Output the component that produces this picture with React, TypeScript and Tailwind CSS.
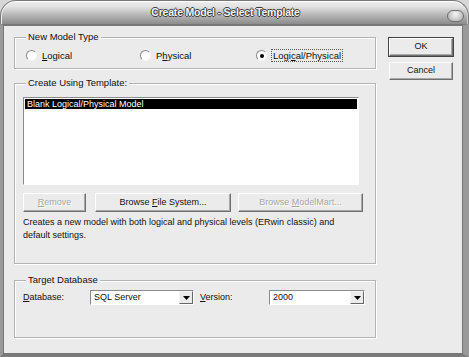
import * as React from "react"

const font = { fontFamily: '"Liberation Sans", Arial, sans-serif' }

function U({ children }: { children: React.ReactNode }) {
  return <span className="underline underline-offset-1">{children}</span>
}

function Radio({ checked, children, focus }: { checked?: boolean; children: React.ReactNode; focus?: boolean }) {
  return (
    <label className="flex items-center gap-[4px]">
      <span className="flex h-[11px] w-[11px] items-center justify-center rounded-full border border-[#8a8a8a] border-b-[#f4f4f4] border-r-[#f4f4f4] bg-white">
        {checked && <span className="h-[4px] w-[4px] rounded-full bg-black" />}
      </span>
      <span className={focus ? "border border-dotted border-[#555] px-[1px] leading-[11px]" : "border border-transparent leading-[11px]"}>{children}</span>
    </label>
  )
}

function Btn({ children, className = "", disabled, primary }: { children: React.ReactNode; className?: string; disabled?: boolean; primary?: boolean }) {
  return (
    <div
      className={
        "flex items-center justify-center bg-[#ebebeb] border border-white border-r-[#6f6f6f] border-b-[#6f6f6f] shadow-[inset_-1px_-1px_0_#a8a8a8] " +
        (primary ? "outline outline-1 outline-[#444] " : "") +
        (disabled ? "text-[#a6a6a6] [text-shadow:1px_1px_0_#fff] " : "text-[#111] ") +
        className
      }
    >
      <span>{children}</span>
    </div>
  )
}

function Select({ value, className = "" }: { value: string; className?: string }) {
  return (
    <div className={"flex h-[15px] items-stretch border border-[#8a8a8a] border-b-white border-r-white bg-white " + className}>
      <div className="flex-1 pl-[3px] leading-[13px]">{value}</div>
      <div className="flex w-[14px] items-center justify-center border border-[#f4f4f4] border-r-[#666] border-b-[#666] bg-[#ebebeb]">
        <svg width="7" height="4" viewBox="0 0 7 4"><path d="M0 0h7L3.5 4z" fill="#000" /></svg>
      </div>
    </div>
  )
}

// etched group box; the caption sits on the top line via a negative margin
function Group({ title, className = "", children }: { title: string; className?: string; children: React.ReactNode }) {
  return (
    <div className={"border border-[#b4b4b4] shadow-[1px_1px_0_#fff,inset_1px_1px_0_#fff] px-[8px] " + className}>
      <div className="-mt-[7px] ml-[3px] w-fit bg-[#ebebeb] px-[2px] text-[9.5px] leading-[12px] text-[#111]">{title}</div>
      {children}
    </div>
  )
}

export default function App() {
  return (
    <div className="flex h-[357px] w-[469px] flex-col overflow-hidden bg-[#d6d6d6] text-[9px] text-[#111]" style={font}>
      <div className="grid h-[24px] shrink-0 grid-cols-[1fr_auto_1fr] items-center rounded-t-[16px] border border-b-0 border-[#7a7a7a] bg-[linear-gradient(#eeeeee_0%,#e2e2e2_25%,#bdbdbd_55%,#8c8c8c_100%)] shadow-[inset_0_1px_0_#fff,inset_1px_0_0_#f0f0f0,inset_-1px_0_0_#d0d0d0]">
        <div />
        <div className="pr-[18px] pt-[1px] text-[10.5px] font-bold tracking-[-0.2px] text-[#f4f4f4] [text-shadow:1px_0_#3a3a3a,-1px_0_#3a3a3a,0_1px_#3a3a3a,0_-1px_#3a3a3a]">
          Create Model - Select Template
        </div>
        <div className="flex justify-end pr-[4px] pt-[6px]">
          <div className="h-[12px] w-[17px] rounded-full border border-[#6e6e6e] bg-[radial-gradient(circle_at_50%_30%,#f6f6f6,#a8a8a8)]" />
        </div>
      </div>
      <div className="flex min-h-0 flex-1 border-l-[3px] border-r-[6px] border-b-[3px] border-l-[#9a9a9a] border-r-[#9a9a9a] border-b-[#7a7a7a] border-t border-t-[#777]">
        <div className="flex flex-1 border border-[#777] bg-[#ebebeb] pl-[10px] pt-[11px] pb-[15px]">
          <div className="flex w-[362px] flex-col">
            <Group title="New Model Type" className="h-[32px] shrink-0">
              <div className="mt-[6px] flex items-center text-[9.5px]">
                <div className="w-[114px] pl-[3px]"><Radio><U>L</U>ogical</Radio></div>
                <div className="w-[116px] pl-[3px]"><Radio>P<U>h</U>ysical</Radio></div>
                <div className="pl-[3px]"><Radio checked focus>Logi<U>c</U>al/Physical</Radio></div>
              </div>
            </Group>
            <Group title="Create Using Template:" className="mt-[14px] h-[181px] shrink-0">
              <div className="mt-[8px] h-[88px] w-[336px] border border-[#8a8a8a] border-b-white border-r-white bg-white p-[1px]">
                <div className="bg-black pl-[2px] leading-[10px] text-white">Blank Logical/Physical Model</div>
              </div>
              <div className="mt-[8px] flex h-[19px]">
                <Btn disabled className="w-[63px]"><U>R</U>emove</Btn>
                <Btn className="ml-[9px] w-[136px]">Browse <U>F</U>ile System...</Btn>
                <Btn disabled className="ml-[7px] w-[125px]">Browse <U>M</U>odelMart...</Btn>
              </div>
              <p className="mt-[4px] w-[318px] leading-[13px]">
                Creates a new model with both logical and physical levels (ERwin classic) and default settings.
              </p>
            </Group>
            <Group title="Target Database" className="mt-[16px] flex-1">
              <div className="mt-[4px] flex items-center">
                <span className="w-[67px]"><U>D</U>atabase:</span>
                <Select value="SQL Server" className="w-[104px]" />
                <span className="ml-[6px] w-[69px]"><U>V</U>ersion:</span>
                <Select value="2000" className="w-[96px]" />
              </div>
            </Group>
          </div>
          <div className="ml-[13px] flex flex-col pt-[1px]">
            <Btn primary className="h-[18px] w-[64px]">OK</Btn>
            <Btn className="mt-[6px] h-[18px] w-[64px]">Cancel</Btn>
          </div>
        </div>
      </div>
    </div>
  )
}
